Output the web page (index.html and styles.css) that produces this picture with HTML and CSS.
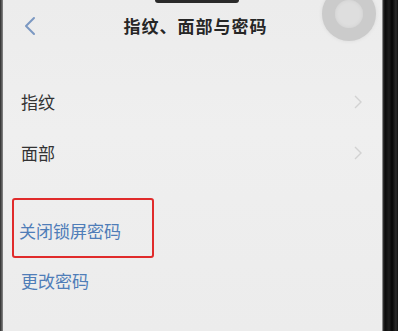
FILE: index.html
```html
<!DOCTYPE html>
<html lang="zh">
<head>
<meta charset="utf-8">
<link rel="stylesheet" href="styles.css">
</head>
<body>
<div class="phone">
  <div class="edge-left"></div>
  <div class="screen">
    <div class="notch"></div>
    <div class="float-ball"></div>
    <header class="topbar">
      <svg class="back" width="12" height="20" viewBox="0 0 12 20"><path d="M10 2 L2 10 L10 18" fill="none" stroke="#7b98c2" stroke-width="2" stroke-linecap="round" stroke-linejoin="round"/></svg>
      <h1 class="title">指纹、面部与密码</h1>
    </header>
    <ul class="list first">
      <li class="row"><span class="label">指纹</span><svg class="chev" width="8" height="14" viewBox="0 0 8 14"><path d="M1 1 L7 7 L1 13" fill="none" stroke="#d2d2d2" stroke-width="1.4"/></svg></li>
      <li class="row"><span class="label">面部</span><svg class="chev" width="8" height="14" viewBox="0 0 8 14"><path d="M1 1 L7 7 L1 13" fill="none" stroke="#d2d2d2" stroke-width="1.4"/></svg></li>
    </ul>
    <div class="gap"></div>
    <ul class="list">
      <li class="row link highlighted"><span class="label">关闭锁屏密码</span></li>
      <li class="row link last"><span class="label">更改密码</span></li>
    </ul>
  </div>
  <div class="edge-right"></div>
</div>
</body>
</html>
```
FILE: styles.css
```css
html, body {
  margin: 0;
  padding: 0;
  width: 398px;
  height: 331px;
  overflow: hidden;
  background: #1a1a1a;
  font-family: "Noto Sans CJK SC", "Noto Sans", sans-serif;
}
.phone {
  display: flex;
  width: 398px;
  height: 331px;
}
.edge-left {
  width: 3px;
  background: linear-gradient(90deg, #2a2a2a, #8a8a8a);
}
.screen {
  position: relative;
  flex: 1;
  background: linear-gradient(180deg, #ececec 0%, #efefef 40%, #ececec 100%);
  display: flex;
  flex-direction: column;
}
.edge-right {
  width: 16px;
  background: linear-gradient(90deg, #d8d8d8 0px, #3a3a3a 1px, #0b0b0b 3px, #1e1e1e 7px, #050505 10px, #2b2b2b 14px, #111 16px);
}
.notch {
  position: absolute;
  left: 152px;
  top: 0;
  width: 84px;
  height: 3px;
  background: #2a2a2a;
  border-radius: 0 0 4px 4px;
}
.float-ball {
  position: absolute;
  left: 319px;
  top: -13px;
  width: 28px;
  height: 28px;
  border-radius: 50%;
  border: 13px solid #cbcbcb;
  background: #dedede;
  box-shadow: 0 0 4px rgba(0,0,0,0.08), inset 0 0 4px rgba(0,0,0,0.06);
}
.topbar {
  height: 54px;
  display: flex;
  align-items: center;
  position: relative;
  padding-left: 21px;
}
.back {
  display: block;
  margin-top: -2px;
}
.title {
  position: absolute;
  left: 0;
  right: 0;
  text-align: center;
  margin: 0;
  font-size: 17px;
  font-weight: 700;
  color: #262626;
  padding-left: 6px;
  letter-spacing: 1px;
  top: 13px;
}
.list {
  list-style: none;
  margin: 0;
  padding: 0;
}
.first {
  margin-top: 22px;
}
.row {
  height: 51px;
  display: flex;
  align-items: center;
  justify-content: space-between;
  padding: 0 20px 0 18px;
  font-size: 17px;
  color: #333;
}
.chev {
  display: block;
}
.gap {
  height: 20px;
}
.link {
  color: #4f7db8;
}
.highlighted {
  margin-left: 9px;
  width: 142px;
  height: 60px;
  box-sizing: border-box;
  border: 2px solid #e02b2b;
  border-radius: 3px;
  padding-left: 5px;
  padding-top: 4px;
}
.last {
  height: 44px;
}
```
